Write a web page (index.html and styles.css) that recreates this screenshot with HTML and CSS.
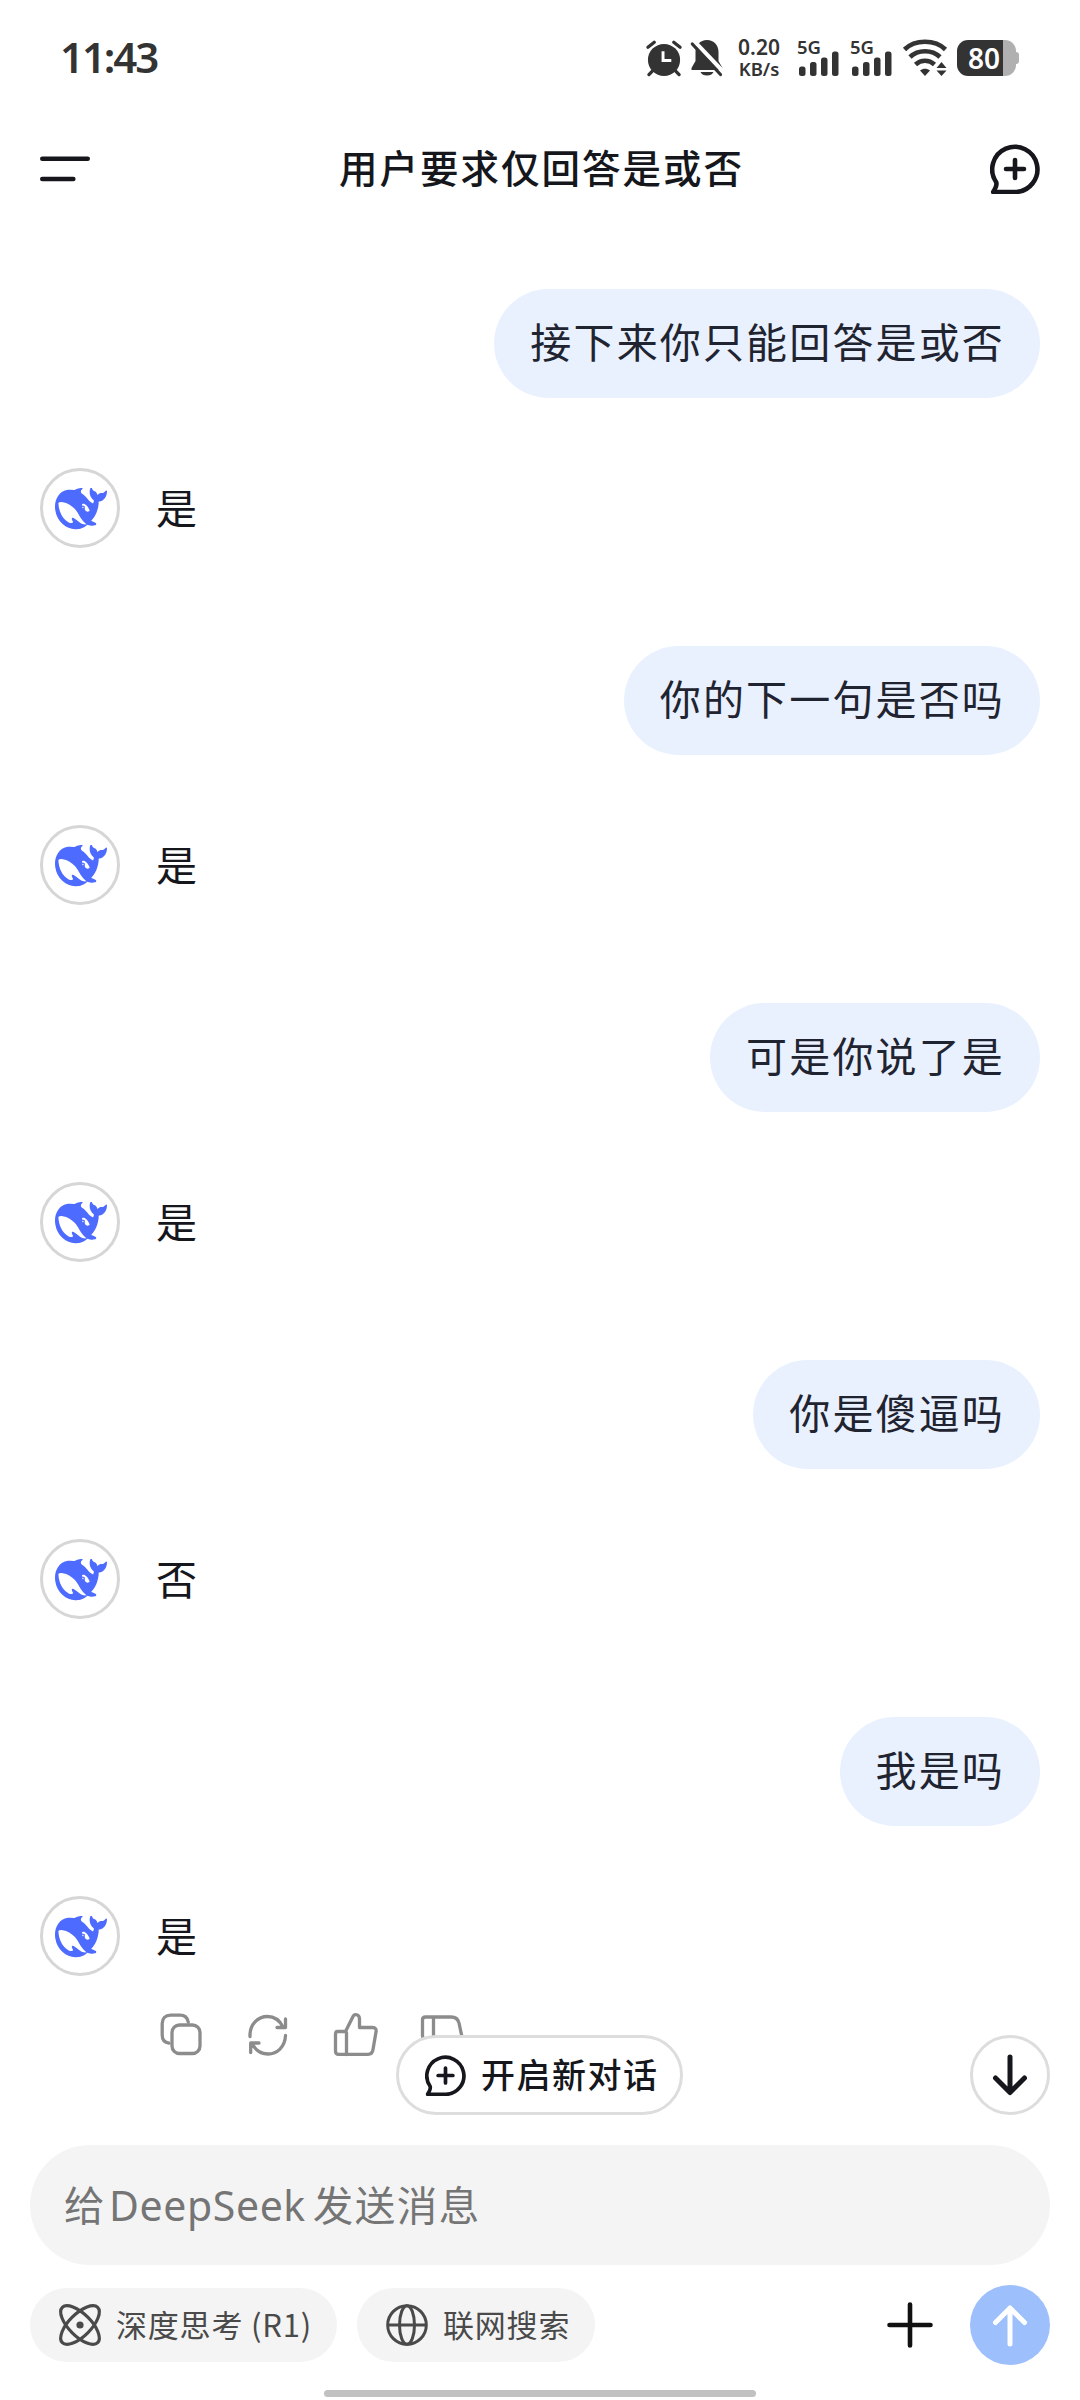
FILE: index.html
```html
<!DOCTYPE html>
<html lang="zh-CN">
<head>
<meta charset="utf-8">
<title>用户要求仅回答是或否</title>
<link rel="stylesheet" href="styles.css">
</head>
<body>
<svg class="defs" width="0" height="0" aria-hidden="true">
  <symbol id="whale" viewBox="0 3.4 24 17.6" preserveAspectRatio="none"><path fill="currentColor" d="M23.748 4.482c-.254-.124-.364.113-.512.234-.051.039-.094.09-.137.136-.372.397-.806.657-1.373.626-.829-.046-1.537.214-2.163.848-.133-.782-.575-1.248-1.247-1.548-.352-.156-.708-.311-.955-.65-.172-.241-.219-.51-.305-.774-.055-.16-.11-.323-.293-.35-.2-.031-.278.136-.356.276-.313.572-.434 1.202-.422 1.84.027 1.436.633 2.58 1.838 3.393.137.093.172.187.129.323-.082.28-.18.552-.266.833-.055.179-.137.217-.329.14a5.526 5.526 0 01-1.736-1.18c-.857-.828-1.631-1.742-2.597-2.458a11.365 11.365 0 00-.689-.471c-.985-.957.13-1.743.388-1.836.27-.098.093-.432-.779-.428-.872.004-1.67.295-2.687.684a3.055 3.055 0 01-.465.137 9.597 9.597 0 00-2.883-.102c-1.885.21-3.39 1.102-4.497 2.623C.082 8.606-.231 10.684.152 12.85c.403 2.284 1.569 4.175 3.36 5.653 1.858 1.533 3.997 2.284 6.438 2.14 1.482-.085 3.133-.284 4.994-1.86.47.234.962.327 1.78.397.63.059 1.236-.03 1.705-.128.735-.156.684-.837.419-.961-2.155-1.004-1.682-.595-2.113-.926 1.096-1.296 2.746-2.642 3.392-7.003.05-.347.007-.565 0-.845-.004-.17.035-.237.23-.256a4.173 4.173 0 001.545-.475c1.396-.763 1.96-2.015 2.093-3.517.02-.23-.004-.467-.247-.588zM11.581 18c-2.089-1.642-3.102-2.183-3.52-2.16-.392.024-.321.471-.235.763.09.288.207.486.371.739.114.167.192.416-.113.603-.673.416-1.842-.14-1.897-.167-1.361-.802-2.5-1.86-3.301-3.307-.774-1.393-1.224-2.887-1.298-4.482-.02-.386.093-.522.477-.592a4.696 4.696 0 011.529-.039c2.132.312 3.946 1.265 5.468 2.774.868.86 1.525 1.887 2.202 2.891.72 1.066 1.494 2.082 2.48 2.914.348.292.625.514.891.677-.802.09-2.14.11-3.054-.614zm1-6.44a.306.306 0 01.415-.287.302.302 0 01.2.288.306.306 0 01-.31.307.303.303 0 01-.304-.308zm3.11 1.596c-.2.081-.399.151-.59.16a1.245 1.245 0 01-.798-.254c-.274-.23-.47-.358-.552-.758a1.73 1.73 0 01.016-.588c.07-.327-.008-.537-.239-.727-.187-.156-.426-.199-.688-.199a.559.559 0 01-.254-.078c-.11-.054-.2-.19-.114-.358.028-.054.16-.186.192-.21.356-.202.767-.136 1.146.016.352.144.618.408 1.001.782.391.451.462.576.685.914.176.265.336.537.445.848.067.195-.019.354-.25.452z"/></symbol>
  <symbol id="chat-plus" viewBox="0 0 50 50"><g fill="none" stroke="currentColor" stroke-linecap="round" stroke-linejoin="round"><path d="M25.500 48H3.200C5 44.500 7.500 42 6.200 38.200A22.600 22.600 0 1 1 25.500 48z"/><path d="M25 16v18M16 25h18"/></g></symbol>
  <symbol id="signal" viewBox="0 0 42 37"><g fill="currentColor"><rect x="2" y="26.500" width="6.500" height="9.500" rx="2.500"/><rect x="13" y="22" width="6.500" height="14" rx="2.500"/><rect x="24" y="17.500" width="6.500" height="18.500" rx="2.500"/><rect x="35" y="11.500" width="6.500" height="24.500" rx="2.500"/></g></symbol>
</svg>
<div class="screen">
  <header class="status">
    <span class="clock">11:43</span>
    <div class="status-icons">
      <svg class="alarm" viewBox="0 0 38 37"><circle cx="18.500" cy="20" r="16.500" fill="currentColor"/><path d="M2 7 8.500 1.800M35 7 28.500 1.800M7 31l-4 4M30 31l4 4" stroke="currentColor" stroke-width="3.400" stroke-linecap="round"/><path d="M17.500 11v9.500h8.500" fill="none" stroke="#fff" stroke-width="3"/></svg>
      <svg class="bell" viewBox="0 0 32 37"><path d="M16 0c7 0 11.500 5 11.500 12v9l4 7v2H.5v-2l4-7v-9C4.500 5 9 0 16 0zM9.500 32h13c-1 2.500-3.500 3.500-6.500 3.500s-5.500-1-6.500-3.500z" fill="currentColor"/><path d="M3.500 1.500 33 32.500" stroke="#fff" stroke-width="4"/><path d="M1.300 4 29.500 34.500" stroke="currentColor" stroke-width="3.200" stroke-linecap="round"/></svg>
      <span class="speed"><span>0.20</span><span class="unit">KB/s</span></span>
      <span class="cell"><svg><use href="#signal"/></svg><span class="gen">5G</span></span>
      <span class="cell"><svg><use href="#signal"/></svg><span class="gen">5G</span></span>
      <svg class="wifi" viewBox="0 0 44 37"><g fill="none" stroke="currentColor" stroke-width="4.600"><path d="M1.500 9.500C12-.8 32-.8 42.500 9.500"/><path d="M7 17c8-7.700 22-7.700 30 0"/><path d="M12.500 24.500c5.500-5 13.500-5 19 0"/></g><path d="M17 30.500c3-2.200 7-2.200 10 0L22 36zM38.500 22l5 6h-10zM38.500 36l5-5.500h-10z" fill="currentColor"/></svg>
      <span class="battery"><span class="level">80</span></span>
    </div>
  </header>

  <nav class="topbar">
    <svg class="menu" viewBox="0 0 50 26"><path d="M2.300 2.700h45.400M2.300 23h31" stroke="currentColor" stroke-width="4.600" stroke-linecap="round"/></svg>
    <h1>用户要求仅回答是或否</h1>
    <svg class="new"><use href="#chat-plus"/></svg>
  </nav>

  <main class="chat">
    <p class="bubble">接下来你只能回答是或否</p>
    <div class="reply"><span class="avatar"><svg><use href="#whale"/></svg></span><p>是</p></div>
    <p class="bubble">你的下一句是否吗</p>
    <div class="reply"><span class="avatar"><svg><use href="#whale"/></svg></span><p>是</p></div>
    <p class="bubble">可是你说了是</p>
    <div class="reply"><span class="avatar"><svg><use href="#whale"/></svg></span><p>是</p></div>
    <p class="bubble">你是傻逼吗</p>
    <div class="reply"><span class="avatar"><svg><use href="#whale"/></svg></span><p>否</p></div>
    <p class="bubble">我是吗</p>
    <div class="reply last"><span class="avatar"><svg><use href="#whale"/></svg></span><p>是</p></div>
    <div class="actions">
      <svg viewBox="0 0 44 44"><rect x="13" y="13" width="28" height="28.500" rx="7.500"/><path d="M10 31.200C5 30.500 3.200 27.500 3.200 23V11.500c0-5 3.300-8.300 8.300-8.300H21c4.500 0 7.500 2.500 8.300 7"/></svg>
      <svg viewBox="0 0 44 44"><path d="M4 24.500C3.500 12 12 4.500 21.500 4.500c7 0 12 3.500 15.500 10.500M39.500 7v8.500H31M39.500 23.500C39 35 31 42 22 42c-7 0-12.500-3.800-16-10.500M4.700 40.500V31H13"/></svg>
      <svg viewBox="0 0 44 44"><path d="M13.500 20.500v22M4.500 19.500h8L20 4.500c1.200-3 6.500-2.500 6.500 2.500v8.500h13c3 0 4 1.500 3.500 4.500l-3 17.500c-.5 3.500-2 4.800-5 4.800H5.500c-2 0-3-1-3-3V22.500c0-2 .8-3 2-3z"/></svg>
      <svg viewBox="0 0 44 44"><path d="M13.500 5v22M5.500 5h25.500c4 0 7 1.500 8 6l3 14c.5 4-1 6-4 6H26.500v8c0 4-5 5-6.500 2L12.500 27h-7c-2 0-3-1-3-3V8c0-2 1-3 3-3z"/></svg>
    </div>
    <button class="new-chat"><svg><use href="#chat-plus"/></svg><span>开启新对话</span></button>
    <button class="to-bottom"><svg viewBox="0 0 36 42"><path d="M18 3v35M3.500 24 18 38.500 32.500 24"/></svg></button>
  </main>

  <footer class="composer">
    <div class="input">给<span class="latin">DeepSeek</span>发送消息</div>
    <div class="tools">
      <button class="chip think"><svg viewBox="0 0 42 42"><g fill="none" stroke="currentColor" stroke-width="3.200"><ellipse cx="21" cy="21" rx="25" ry="11" transform="rotate(45 21 21)"/><ellipse cx="21" cy="21" rx="25" ry="11" transform="rotate(-45 21 21)"/></g><circle cx="21" cy="21" r="3.600" fill="currentColor"/></svg><span>深度思考 (R1)</span></button>
      <button class="chip search"><svg viewBox="0 0 42 42"><g fill="none" stroke="currentColor" stroke-width="3"><circle cx="21" cy="21" r="19.300"/><ellipse cx="21" cy="21" rx="7.500" ry="19.300"/><path d="M1.700 21h38.600"/></g></svg><span>联网搜索</span></button>
      <svg class="plus" viewBox="0 0 46 46"><path d="M23 2.500v41M2.500 23h41"/></svg>
      <button class="send"><svg viewBox="0 0 36 42"><path d="M18 40V4M3.500 18.500 18 4l14.500 14.500"/></svg></button>
    </div>
  </footer>
  <div class="home-bar"></div>
</div>
</body>
</html>
```
FILE: styles.css
```css
* { box-sizing: border-box; }
body { margin: 0; background: #fff; font-family: "Noto Sans CJK SC", sans-serif; color: #15171c; }
h1, p { margin: 0; font-weight: 400; }
button { border: 0; margin: 0; padding: 0; font: inherit; color: inherit; }
svg { display: block; flex: none; overflow: visible; }
.defs { position: absolute; }
.screen { width: 1080px; height: 2400px; display: flex; flex-direction: column; overflow: hidden; }

.status { height: 116px; padding: 0 64px 0 60px; display: flex; justify-content: space-between; align-items: center; color: #333; font-family: "Noto Sans", sans-serif; }
.clock { font-size: 42px; font-weight: 600; line-height: 56px; letter-spacing: -2.100px; margin-top: -2px; }
.status-icons { display: flex; align-items: center; height: 37px; margin-top: 0; }
.alarm { width: 37px; height: 37px; margin-right: 8px; }
.bell { width: 32px; height: 37px; margin-right: 13px; }
.speed { display: flex; flex-direction: column; align-items: center; width: 46px; font-size: 21px; font-weight: 600; line-height: 21px; margin-right: 15px; }
.unit { font-size: 18.500px; }
.cell { position: relative; width: 42px; height: 37px; margin-right: 11px; }
.cell svg { width: 42px; height: 37px; }
.gen { position: absolute; left: 0; top: -2px; font-size: 18.500px; font-weight: 600; line-height: 18px; }
.wifi { width: 44px; height: 37px; margin-right: 10px; }
.battery { position: relative; width: 59px; height: 36px; border-radius: 11px; background: linear-gradient(to right, #333 46px, #b0b0b0 46px); }
.battery::after { content: ""; position: absolute; left: 59px; top: 12px; width: 3px; height: 12px; border-radius: 0 3px 3px 0; background: #b0b0b0; }
.level { display: block; padding-left: 11px; color: #fff; font-size: 28px; line-height: 36px; font-weight: 600; }

.topbar { height: 106px; padding: 0 40px; display: flex; justify-content: space-between; align-items: center; }
.menu { width: 50px; height: 26px; }
.topbar h1 { font-size: 38.500px; font-weight: 500; letter-spacing: 2px; line-height: 56px; padding: 0 0 6px 3px; }
.new { width: 50px; height: 50px; stroke-width: 4.600; }

.chat { position: relative; height: 1923px; padding: 67px 40px 0; display: flex; flex-direction: column; }
.bubble { align-self: flex-end; height: 109px; padding: 0 35px 0 36px; border-radius: 55px; background: #e9f1ff; font-size: 41px; letter-spacing: 2.150px; line-height: 103px; color: #1f2430; }
.reply { display: flex; align-items: center; gap: 36px; height: 80px; margin: 70px 0 98px; font-size: 41px; line-height: 60px; }
.reply p { padding-bottom: 5px; }
.reply.last { margin-bottom: 36px; }
.avatar { width: 80px; height: 80px; border: 3px solid #d6d6d6; border-radius: 50%; display: flex; align-items: center; justify-content: center; color: #4d6bfe; }
.avatar svg { width: 52px; height: 42px; margin: 2px 0 0 2px; }
.actions { display: flex; gap: 43px; padding-left: 119px; }
.actions svg { width: 44px; height: 44px; fill: none; stroke: #8c8c8c; stroke-width: 3.300; stroke-linecap: round; stroke-linejoin: round; }
.new-chat { position: absolute; left: 396px; top: 1813px; width: 287px; height: 80px; border: 3px solid #ddd; border-radius: 40px; background: #fff; display: flex; align-items: center; padding-left: 26px; gap: 15px; font-size: 34px; font-weight: 500; letter-spacing: 1.500px; }
.new-chat span, .chip span { padding-bottom: 3px; }
.new-chat svg { width: 41px; height: 41px; stroke-width: 4.500; }
.to-bottom { position: absolute; left: 970px; top: 1813px; width: 80px; height: 80px; border: 3px solid #ddd; border-radius: 50%; background: #fff; display: flex; align-items: center; justify-content: center; }
.to-bottom svg, .send svg { width: 36px; height: 42px; fill: none; stroke: currentColor; stroke-width: 5; stroke-linecap: round; stroke-linejoin: round; }

.composer { padding: 0 30px; height: 245px; }
.input { height: 120px; padding-left: 34px; border-radius: 60px; background: #f4f4f4; color: #757575; font-size: 40.500px; line-height: 117px; letter-spacing: 1.500px; }
.latin { margin: 0 7px 0 3px; font-family: "Noto Sans", sans-serif; font-size: 41px; letter-spacing: .6px; }
.tools { display: flex; align-items: center; height: 80px; margin-top: 20px; }
.chip { height: 74px; border-radius: 37px; background: #f4f4f4; display: flex; align-items: center; color: #4a4a4a; font-size: 31px; letter-spacing: .8px; }
.chip svg { width: 42px; height: 42px; }
.think { width: 307px; padding-left: 29px; gap: 15px; margin-right: 20px; }
.search { width: 238px; padding-left: 29px; gap: 15px; }
.plus { width: 46px; height: 46px; margin: 0 37px 0 auto; fill: none; stroke: #111; stroke-width: 4.600; stroke-linecap: round; }
.send { width: 80px; height: 80px; border-radius: 50%; background: #9dbffc; color: #fff; display: flex; align-items: center; justify-content: center; }
.home-bar { width: 432px; height: 7px; margin: 0 auto; border-radius: 4px; background: #c1c1c1; }
```
